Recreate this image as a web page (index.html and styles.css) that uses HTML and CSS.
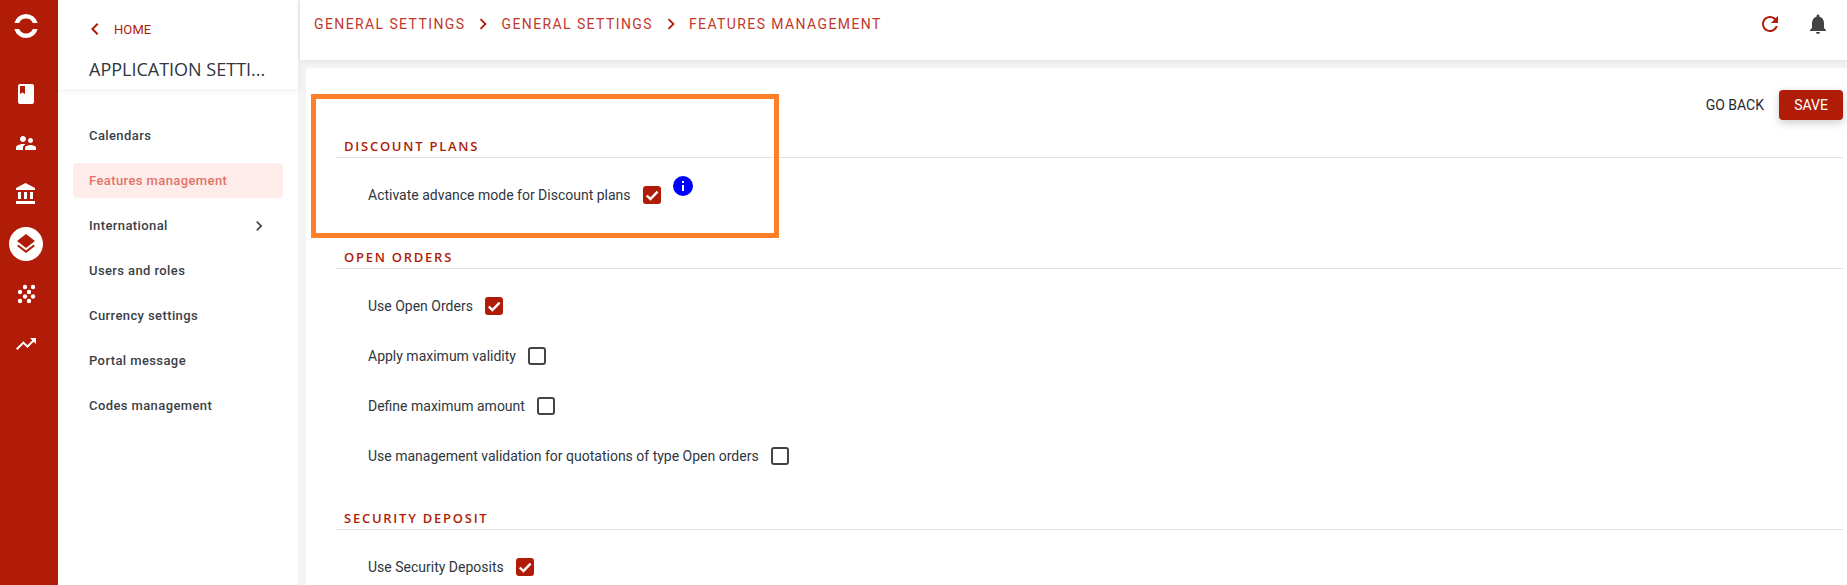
FILE: index.html
```html
<!DOCTYPE html>
<html lang="en">
<head>
<meta charset="utf-8">
<title>Features management</title>
<link rel="stylesheet" href="styles.css">
</head>
<body>
<div class="app">
  <aside class="rail">
    <svg class="logo" viewBox="0 0 24 26"><path d="M.38 10A12 12 0 0 1 23.62 10H18.87A7.5 7.5 0 0 0 5.13 10ZM.38 16A12 12 0 0 0 23.62 16H18.87A7.5 7.5 0 0 1 5.13 16Z"/></svg>
    <svg class="rail-icon book" viewBox="0 0 24 24"><path d="M18 2H6a2 2 0 0 0-2 2v16a2 2 0 0 0 2 2h12a2 2 0 0 0 2-2V4a2 2 0 0 0-2-2M6 4h5v8l-2.5-1.5L6 12z"/></svg>
    <svg class="rail-icon people" viewBox="0 0 24 24"><path d="M16.5 12c1.38 0 2.49-1.12 2.49-2.5S17.88 7 16.5 7C15.12 7 14 8.12 14 9.5s1.12 2.5 2.5 2.5zM9 11c1.66 0 2.99-1.34 2.99-3S10.66 5 9 5C7.34 5 6 6.34 6 8s1.34 3 3 3zm7.5 3c-1.83 0-5.5.92-5.5 2.75V19h11v-2.25c0-1.83-3.67-2.75-5.5-2.75zM9 13c-2.33 0-7 1.17-7 3.5V19h7v-2.25c0-.85.33-2.34 2.37-3.47C10.5 13.1 9.66 13 9 13z"/></svg>
    <svg class="rail-icon bank" viewBox="0 0 24 24"><path d="M4 10v7h3v-7H4zm6 0v7h3v-7h-3zM2 22h19v-3H2v3zm14-12v7h3v-7h-3zm-4.5-9L2 6v2h19V6l-9.5-5z"/></svg>
    <div class="rail-active"><svg viewBox="0 0 24 24"><path d="M11.99 18.54l-7.37-5.73L3 14.07l9 7 9-7-1.63-1.27-7.38 5.74zM12 16l7.36-5.73L21 9l-9-7-9 7 1.63 1.27L12 16z"/></svg></div>
    <svg class="rail-icon dots" viewBox="0 0 24 24"><circle cx="11" cy="3" r="2.2"/><circle cx="19" cy="3" r="2.2"/><circle cx="6" cy="8" r="2.2"/><circle cx="15" cy="8" r="2.2"/><circle cx="11" cy="12.5" r="2.2"/><circle cx="19" cy="12.5" r="2.2"/><circle cx="6" cy="17" r="2.2"/><circle cx="15" cy="17" r="2.2"/></svg>
    <svg class="rail-icon trend" viewBox="0 0 24 24"><path d="M16 6l2.29 2.29-4.88 4.88-4-4L2 16.59 3.41 18l6-6 4 4 6.3-6.29L22 12V6z"/></svg>
  </aside>

  <nav class="sidenav">
    <div class="sidenav-head">
      <a class="home"><svg viewBox="0 0 24 24"><path d="M15.41 7.41L14 6l-6 6 6 6 1.41-1.41L10.83 12z"/></svg><span>HOME</span></a>
      <h1>APPLICATION SETTI...</h1>
    </div>
    <ul class="menu">
      <li>Calendars</li>
      <li class="active">Features management</li>
      <li class="has-sub">International<svg viewBox="0 0 24 24"><path d="M10 6L8.59 7.41 13.17 12l-4.58 4.59L10 18l6-6z"/></svg></li>
      <li>Users and roles</li>
      <li>Currency settings</li>
      <li>Portal message</li>
      <li>Codes management</li>
    </ul>
  </nav>

  <div class="content">
    <header class="topbar">
      <div class="crumbs">
        <span>GENERAL SETTINGS</span>
        <svg viewBox="0 0 24 24"><path d="M10 6L8.59 7.41 13.17 12l-4.58 4.59L10 18l6-6z"/></svg>
        <span>GENERAL SETTINGS</span>
        <svg viewBox="0 0 24 24"><path d="M10 6L8.59 7.41 13.17 12l-4.58 4.59L10 18l6-6z"/></svg>
        <span>FEATURES MANAGEMENT</span>
      </div>
      <div class="top-actions">
        <svg class="refresh" viewBox="0 0 24 24"><path d="M17.65 6.35C16.2 4.9 14.21 4 12 4c-4.42 0-7.99 3.58-7.99 8s3.57 8 7.99 8c3.73 0 6.84-2.55 7.73-6h-2.08c-.82 2.33-3.04 4-5.65 4-3.31 0-6-2.69-6-6s2.69-6 6-6c1.66 0 3.14.69 4.22 1.78L13 11h7V4l-2.35 2.35z"/></svg>
        <svg class="bell" viewBox="0 0 24 24"><path d="M12 22c1.1 0 2-.9 2-2h-4c0 1.1.89 2 2 2zm6-6v-5c0-3.07-1.64-5.64-4.5-6.32V4c0-.83-.67-1.5-1.5-1.5s-1.5.67-1.5 1.5v.68C7.63 5.36 6 7.92 6 11v5l-2 2v1h16v-1l-2-2z"/></svg>
      </div>
    </header>

    <main class="card">
      <div class="highlight"></div>
      <div class="toolbar">
        <button class="btn-text">GO BACK</button>
        <button class="btn-save">SAVE</button>
      </div>

      <section class="section">
        <h2>DISCOUNT PLANS</h2>
        <div class="row">
          <span>Activate advance mode for Discount plans</span>
          <i class="check on"><svg viewBox="0 0 18 18"><path d="M3.8 9.5l3.6 3.6L14.6 5.6"/></svg></i>
          <svg class="info" viewBox="0 0 24 24"><path d="M13 9h-2V7h2m0 10h-2v-6h2m-1-9A10 10 0 0 0 2 12a10 10 0 0 0 10 10 10 10 0 0 0 10-10A10 10 0 0 0 12 2z"/></svg>
        </div>
      </section>

      <section class="section">
        <h2>OPEN ORDERS</h2>
        <div class="row"><span>Use Open Orders</span><i class="check on"><svg viewBox="0 0 18 18"><path d="M3.8 9.5l3.6 3.6L14.6 5.6"/></svg></i></div>
        <div class="row"><span>Apply maximum validity</span><i class="check"></i></div>
        <div class="row"><span>Define maximum amount</span><i class="check"></i></div>
        <div class="row"><span>Use management validation for quotations of type Open orders</span><i class="check"></i></div>
      </section>

      <section class="section last">
        <h2>SECURITY DEPOSIT</h2>
        <div class="row"><span>Use Security Deposits</span><i class="check on"><svg viewBox="0 0 18 18"><path d="M3.8 9.5l3.6 3.6L14.6 5.6"/></svg></i></div>
      </section>
    </main>
  </div>
</div>
</body>
</html>
```
FILE: styles.css
```css
* { box-sizing: border-box; }
html, body { margin: 0; height: 100%; overflow: hidden; }
body { background: #f3f3f3; font-family: Roboto, "Liberation Sans", sans-serif; color: #2f3640; }

.app { display: flex; height: 585px; }

/* rail */
.rail { width: 58px; flex: none; background: #b01c07; display: flex; flex-direction: column; align-items: center; padding-right: 6px; }
.logo { width: 24px; height: 26px; margin-top: 13px; fill: #fff; display: block; flex: none; }
.rail-icon { width: 24px; height: 24px; fill: #fff; display: block; flex: none; }
.book { margin-top: 43px; }
.people { margin-top: 25px; }
.bank { margin-top: 27px; }
.rail-active { width: 34px; height: 34px; margin-top: 21px; border-radius: 50%; background: #fff; display: flex; align-items: center; justify-content: center; flex: none; }
.rail-active svg { width: 24px; height: 24px; fill: #b01c07; }
.dots { margin-top: 23px; }
.trend { margin-top: 24px; }

/* side nav */
.sidenav { width: 240px; flex: none; background: #fff; }
.sidenav-head { height: 89px; box-shadow: 0 2px 6px rgba(0,0,0,.06); padding: 17px 0 0 31px; }
.home { display: flex; align-items: center; height: 24px; color: #b01c07; font-size: 13px; }
.home svg { width: 24px; height: 24px; fill: #b01c07; margin-right: 7px; flex: none; margin-left: -6px; }
.home span { letter-spacing: .1px; }
.sidenav-head h1 { margin: 16px 0 0 0; font: 400 18px/24px "Open Sans", sans-serif; color: #2f3640; white-space: nowrap; }
.menu { list-style: none; margin: 0; padding: 29px 15px 0; }
.menu li { height: 35px; margin-bottom: 10px; padding-left: 16px; border-radius: 4px; display: flex; align-items: center; font-size: 13px; font-weight: 500; letter-spacing: .4px; color: #3a3f47; }
.menu li.active { background: #fdecea; color: #e07468; }
.menu li.has-sub { justify-content: space-between; }
.menu li.has-sub svg { width: 20px; height: 20px; fill: #444; margin-right: 14px; }

/* content */
.content { flex: 1; min-width: 0; display: flex; flex-direction: column; }
.topbar { height: 60px; flex: none; margin-left: 2px; background: #fff; box-shadow: 0 1px 6px rgba(0,0,0,.08); display: flex; justify-content: space-between; padding: 12px 9px 0 14px; position: relative; z-index: 1; }
.crumbs { display: flex; align-items: center; height: 24px; font-size: 14px; color: #c0392b; letter-spacing: 1.4px; gap: 9px; }
.crumbs svg { width: 22px; height: 22px; fill: #b01c07; flex: none; margin: 0 -2px; }
.top-actions { display: flex; align-items: center; height: 24px; gap: 24px; }
.top-actions svg { width: 24px; height: 24px; flex: none; }
.refresh { fill: #b01c07; }
.bell { fill: #444; margin-right: 8px; }

.card { flex: 1; margin: 8px 0 0 8px; background: #fff; border-radius: 4px 0 0 0; padding: 22px 4px 0 30px; position: relative; overflow: hidden; }
.highlight { position: absolute; left: 5px; top: 26px; width: 468px; height: 144px; border: 5px solid #ff8029; pointer-events: none; }
.toolbar { display: flex; justify-content: flex-end; align-items: center; height: 30px; gap: 15px; }
.btn-text, .btn-save { font: 400 14px/30px Roboto, sans-serif; border: 0; padding: 0; height: 30px; }
.btn-text { background: none; color: #1f2630; }
.btn-save { background: #b01c07; color: #fff; width: 64px; border-radius: 4px; box-shadow: 0 3px 8px rgba(0,0,0,.2); }

.section { margin-bottom: 26px; }
.section.last { margin-top: 1px; }
.section h2 { margin: 0; font: 600 13px/22px "Open Sans", sans-serif; letter-spacing: 1.75px; color: #b01c07; padding-left: 8px; border-bottom: 1px solid #e2e2e2; box-sizing: content-box; }
.section:first-of-type h2 { padding-top: 15px; }
.section h2 + .row { margin-top: 12px; }
.row { height: 50px; display: flex; align-items: center; padding-left: 32px; gap: 12px; font-size: 14px; color: #2f3640; }
.check { width: 18px; height: 18px; flex: none; border: 2px solid #444; border-radius: 3px; display: block; }
.check.on { background: #b01c07; border: 0; }
.check svg { display: block; width: 18px; height: 18px; fill: none; stroke: #fff; stroke-width: 2.4; }
.info { width: 24px; height: 24px; fill: #0000ff; flex: none; margin-left: -2px; margin-bottom: 18px; }
```
